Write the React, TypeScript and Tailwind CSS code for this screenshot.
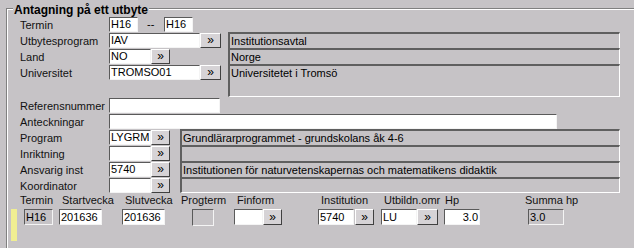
import clsx from "clsx";
import { type ReactNode } from "react";

const sunken =
  "border-t border-l border-b border-r border-t-[#5a5a5a] border-l-[#5a5a5a] border-b-[#f4f4f4] border-r-[#f4f4f4]";

function TextBox({
  className,
  value,
  right,
  disabled,
}: {
  className?: string;
  value?: string;
  right?: boolean;
  disabled?: boolean;
}) {
  return (
    <div
      className={clsx(
        "h-[15px] shrink-0 overflow-hidden whitespace-nowrap px-[1px] text-[11px] leading-[13px] text-black",
        sunken,
        disabled ? "bg-[#c6c3c6]" : "bg-white",
        right && "text-right",
        className,
      )}
    >
      {value}
    </div>
  );
}

function Btn({ className }: { className?: string }) {
  return (
    <button
      type="button"
      className={clsx(
        "flex h-[15px] shrink-0 items-center justify-center border-t border-l border-b border-r border-t-white border-l-white border-b-[#404040] border-r-[#404040] bg-[#d6d3d6] pb-[1px] text-[12px] leading-none text-black",
        className,
      )}
    >
      »
    </button>
  );
}

function Display({ value, last }: { value?: string; last?: boolean }) {
  return (
    <div
      className={clsx(
        "overflow-hidden whitespace-nowrap border-t-2 border-l-2 border-r border-t-[#5f5f5f] border-l-[#5f5f5f] border-r-white pl-[1px] text-[11px] leading-[14px] text-black",
        last && "border-b border-b-white",
      )}
    >
      {value}
    </div>
  );
}

function Label({ children }: { children?: ReactNode }) {
  return <div className="whitespace-nowrap pt-[1px] text-[11px] leading-4 text-[#111]">{children}</div>;
}

function Cell({ children, className }: { children?: ReactNode; className?: string }) {
  return <div className={clsx("flex items-end", className)}>{children}</div>;
}

export default function App() {
  return (
    <div className="h-[248px] w-[634px] overflow-hidden bg-[#c6c3c6] pl-[6px] pt-[8px] font-['Liberation_Sans',Arial,sans-serif]">
      <div className="relative h-[260px] w-[700px] border-t border-l border-[#808080]">
        <div className="absolute -top-[6px] left-[6px] bg-[#c6c3c6] px-[1px] text-[12px] font-bold leading-[14px] text-black">
          Antagning på ett utbyte
        </div>
        <div className="h-full border-t border-l border-white pt-[6px]">
          {/* utbyte */}
          <div className="ml-[12px] grid grid-cols-[89px_119px_392px] grid-rows-[16px_16px_16px_16px_17px_16px_16px]">
            <Label>Termin</Label>
            <Cell className="col-span-2">
              <TextBox className="w-[29px]" value="H16" />
              <span className="w-[26px] pl-[9px] text-[11px] leading-[15px] text-black">--</span>
              <TextBox className="w-[29px]" value="H16" />
            </Cell>

            <Label>Utbytesprogram</Label>
            <Cell>
              <TextBox className="w-[91px]" value="IAV" />
              <Btn className="w-[21px]" />
            </Cell>
            <Display value="Institutionsavtal" />

            <Label>Land</Label>
            <Cell>
              <TextBox className="w-[42px]" value="NO" />
              <Btn className="w-[19px]" />
            </Cell>
            <Display value="Norge" />

            <Label>Universitet</Label>
            <Cell>
              <TextBox className="w-[91px]" value="TROMSO01" />
              <Btn className="w-[21px]" />
            </Cell>
            <div className="row-span-2 grid">
              <Display value="Universitetet i Tromsö" last />
            </div>
            <div />
            <div />

            <Label>Referensnummer</Label>
            <Cell className="col-span-2">
              <TextBox className="w-[111px]" />
            </Cell>

            <Label>Anteckningar</Label>
            <Cell className="col-span-2">
              <TextBox className="w-[448px]" />
            </Cell>
          </div>

          {/* program */}
          <div className="ml-[12px] grid grid-cols-[89px_71px_440px] grid-rows-[16px_16px_16px_16px]">
            <Label>Program</Label>
            <Cell>
              <TextBox className="w-[42px]" value="LYGRM" />
              <Btn className="w-[19px]" />
            </Cell>
            <Display value="Grundlärarprogrammet - grundskolans åk 4-6" />

            <Label>Inriktning</Label>
            <Cell>
              <TextBox className="w-[42px]" />
              <Btn className="w-[19px]" />
            </Cell>
            <Display />

            <Label>Ansvarig inst</Label>
            <Cell>
              <TextBox className="w-[42px]" value="5740" />
              <Btn className="w-[19px]" />
            </Cell>
            <Display value="Institutionen för naturvetenskapernas och matematikens didaktik" />

            <Label>Koordinator</Label>
            <Cell>
              <TextBox className="w-[42px]" />
              <Btn className="w-[19px]" />
            </Cell>
            <Display last />
          </div>

          {/* kurs */}
          <div className="ml-[12px] mt-[1px] flex text-[11px] leading-[13px] text-[#111]">
            <span className="w-[42px]">Termin</span>
            <span className="w-[63px]">Startvecka</span>
            <span className="w-[56px]">Slutvecka</span>
            <span className="w-[56px]">Progterm</span>
            <span className="w-[84px]">Finform</span>
            <span className="w-[63px]">Institution</span>
            <span className="w-[61px]">Utbildn.omr</span>
            <span className="w-[80px]">Hp</span>
            <span>Summa hp</span>
          </div>
          <div className="ml-[3px] mt-[2px] flex items-start">
            <div className="h-[32px] w-[6px] bg-[#f0ee92]" />
            <TextBox className="ml-[7px] h-[16px] w-[29px] leading-[14px]" value="H16" disabled />
            <TextBox className="ml-[6px] h-[16px] w-[43px] leading-[14px]" value="201636" />
            <TextBox className="ml-[20px] h-[16px] w-[43px] leading-[14px]" value="201636" />
            <TextBox className="ml-[27px] h-[17px] w-[22px]" disabled />
            <TextBox className="ml-[20px] h-[16px] w-[29px]" />
            <Btn className="h-[16px] w-[19px]" />
            <TextBox className="ml-[36px] h-[16px] w-[36px] leading-[14px]" value="5740" />
            <Btn className="ml-[1px] h-[16px] w-[19px]" />
            <TextBox className="ml-[7px] h-[16px] w-[36px] leading-[14px]" value="LU" />
            <Btn className="h-[16px] w-[21px]" />
            <TextBox className="ml-[6px] h-[16px] w-[36px] leading-[14px]" value="3.0" right />
            <TextBox className="ml-[48px] h-[16px] w-[36px] leading-[14px]" value="3.0" disabled />
          </div>
        </div>
      </div>
    </div>
  );
}
